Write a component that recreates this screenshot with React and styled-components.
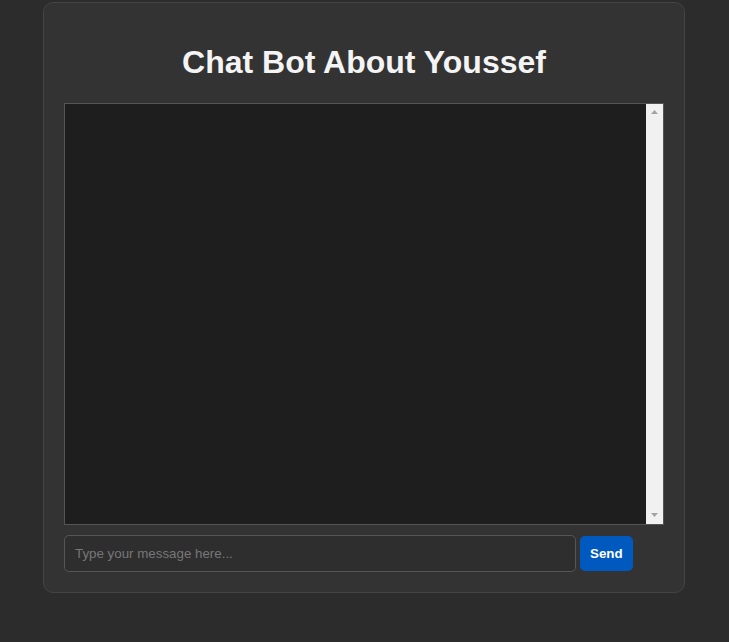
import React from "react";
import styled, { createGlobalStyle } from "styled-components";

const GlobalStyle = createGlobalStyle`
  html, body {
    margin: 0;
    padding: 0;
    background: #2c2c2c;
    font-family: "Liberation Sans", Arial, sans-serif;
  }
  body {
    padding: 2px 1px 0 0;
  }
`;

const Container = styled.div`
  width: 600px;
  margin: 0 auto;
  padding: 20px;
  background: #333333;
  border: 1px solid #444444;
  border-radius: 10px;
`;

const Title = styled.h1`
  font-size: 32px;
  font-weight: bold;
  color: #f4f4f4;
  text-align: center;
  margin: 21.44px 0;
`;

const ChatBox = styled.div`
  box-sizing: border-box;
  display: flex;
  width: 100%;
  height: 422px;
  background: #1e1e1e;
  border: 1px solid #555555;
  margin-bottom: 10px;
`;

const Messages = styled.div`
  flex: 1;
  padding: 10px;
  overflow: hidden;
`;

const ScrollTrack = styled.div`
  width: 17px;
  background: #f1f1f1;
  display: flex;
  flex-direction: column;
  justify-content: space-between;
`;

const ScrollArrow = styled.div`
  height: 17px;
  display: flex;
  align-items: center;
  justify-content: center;
  svg {
    display: block;
  }
`;

const InputRow = styled.div`
  display: flex;
  align-items: center;
  gap: 4px;
`;

const MessageInput = styled.input`
  box-sizing: border-box;
  width: 512px;
  height: 37px;
  padding: 10px;
  font-family: "Liberation Sans", Arial, sans-serif;
  font-size: 13.333px;
  color: #eeeeee;
  background: #2e2e2e;
  border: 1px solid #555555;
  border-radius: 5px;
  outline: none;
  &::placeholder {
    color: #777777;
  }
`;

const SendButton = styled.button`
  box-sizing: border-box;
  height: 35px;
  padding: 0 10px;
  font-family: "Liberation Sans", Arial, sans-serif;
  font-size: 13.333px;
  font-weight: bold;
  color: #ffffff;
  background: #0059bf;
  border: none;
  border-radius: 5px;
  cursor: pointer;
`;

const Arrow = ({ down }) => (
  <svg width="7" height="4" viewBox="0 0 7 4">
    <polygon
      points={down ? "0,0 7,0 3.5,4" : "3.5,0 7,4 0,4"}
      fill="#a3a3a3"
    />
  </svg>
);

export default function App() {
  return (
    <>
      <GlobalStyle />
      <Container>
        <Title>Chat Bot About Youssef</Title>
        <ChatBox>
          <Messages />
          <ScrollTrack>
            <ScrollArrow>
              <Arrow />
            </ScrollArrow>
            <ScrollArrow>
              <Arrow down />
            </ScrollArrow>
          </ScrollTrack>
        </ChatBox>
        <InputRow>
          <MessageInput type="text" placeholder="Type your message here..." />
          <SendButton>Send</SendButton>
        </InputRow>
      </Container>
    </>
  );
}
